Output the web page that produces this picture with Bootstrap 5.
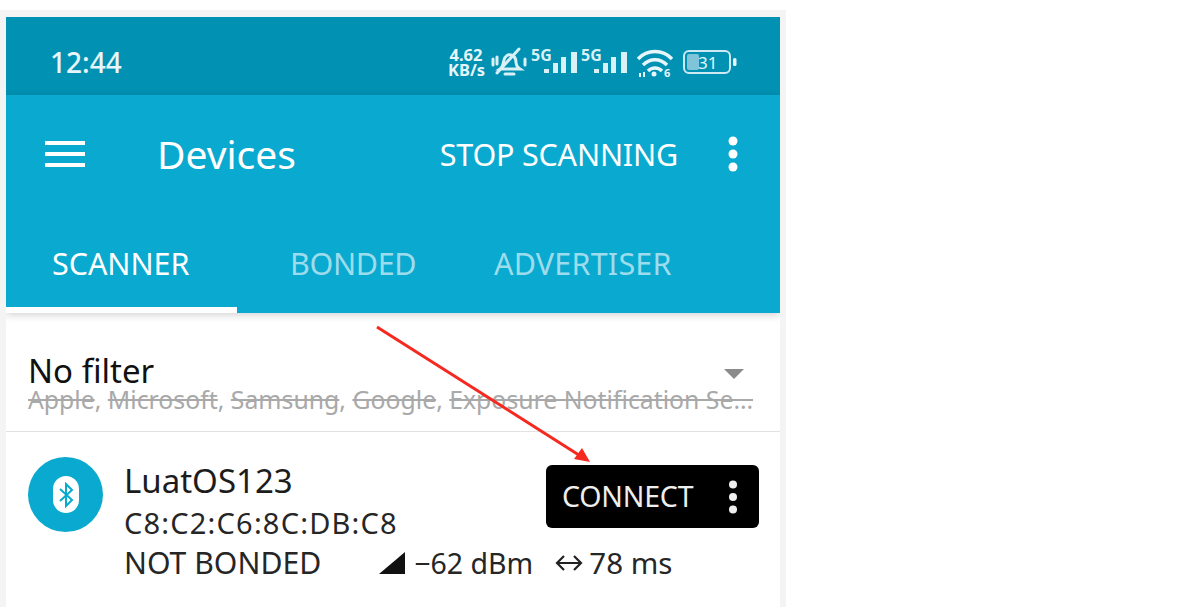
<!DOCTYPE html>
<html lang="en">
<head>
    <meta charset="UTF-8">
    <meta name="viewport" content="width=device-width, initial-scale=1.0">
    <title>Devices</title>
    <link href="https://cdn.jsdelivr.net/npm/bootstrap@5.3.0/dist/css/bootstrap.min.css" rel="stylesheet">
    <style>
        html, body { height: 100%; }
        body { background: #fff; font-family: "Noto Sans", sans-serif; overflow: hidden; padding-top: 10px; }
        .phone-frame { width: 786px; height: 597px; background: #f4f4f4; padding: 7px 6px 0; position: relative; }
        .phone-screen { height: 100%; background: #fff; overflow: hidden; }
        .status-strip { height: 78px; background: #0091b3; color: #e6f6fa; padding: 12px 43px 0 44px; }
        .clock-text { font-size: 28px; font-weight: 500; }
        .speed-text { font-size: 16.5px; line-height: 15px; font-weight: 700; text-align: center; width: 36px; white-space: nowrap; }
        .status-icons svg { display: block; flex: none; }
        .bell-icon { margin-left: 7px; }
        .wifi-icon, .batt-icon { margin-left: 10px; }
        .tool-strip { height: 218px; background: #0aa9cf; color: #fff; box-shadow: 0 2px 8px rgba(0,0,0,.18); position: relative; }
        .tool-row { height: 118px; padding: 0 41px 0 39px; }
        .tool-title { font-size: 39px; margin-left: 72px; line-height: 1; padding-bottom: 2px; }
        .tool-action { font-size: 30.5px; letter-spacing: -.2px; line-height: 1; margin-right: 49px; }
        .tab-row { height: 100px; }
        .tab-cell { height: 100%; display: flex; align-items: center; font-size: 30.5px; letter-spacing: -.2px; padding-top: 2px; }
        .tab-scan { width: 231px; padding: 8px 0 0 46px; border-bottom: 6px solid #fff; letter-spacing: -.05px; }
        .tab-bond { width: 257px; padding-left: 53px; color: #9ddcec; letter-spacing: -.35px; }
        .tab-adv { color: #9ddcec; letter-spacing: .2px; }
        .filter-row { height: 119px; border-bottom: 1px solid #e2e2e2; padding: 42px 27px 0 22px; position: relative; }
        .filter-name { font-size: 33px; line-height: 32px; color: #111; }
        .filter-sub { font-size: 24.8px; line-height: 24px; color: #a9a9a9; white-space: nowrap; }
        .filter-sub span { text-decoration: line-through; }
        .filter-caret { position: absolute; right: 36px; top: 56px; width: 0; height: 0; border-left: 10.5px solid transparent; border-right: 10.5px solid transparent; border-top: 10px solid #8b8b8b; }
        .device-row { padding: 25px 21px 0 22px; }
        .ble-disc { width: 75px; height: 75px; border-radius: 50%; background: #0aa9cf; flex: none; margin-right: 21px; }
        .ble-pill { width: 26px; height: 37px; border-radius: 13px; background: #fff; }
        .device-name { font-size: 33px; line-height: 45px; color: #1c1c1c; margin-top: 1px; }
        .device-line { font-size: 29px; line-height: 40px; color: #262626; white-space: nowrap; }
        .mac-line { letter-spacing: 1.2px; }
        .stat-line { font-size: 30.200px; }
        .stat-num { font-size: 28.500px; }
        .stat-ms { font-size: 29.500px; }
        .stat-tri { margin-left: 58px; margin-right: 9px; }
        .stat-arrows { margin-left: 22px; margin-right: 6px; }
        .connect-btn { position: absolute; left: 546px; top: 455px; width: 213px; height: 63px; background: #000; color: #eee; border-radius: 6px; font-size: 28.500px; padding: 0 20px 0 16px; letter-spacing: -.2px; }
        .arrow-layer { position: absolute; left: 0; top: 0; pointer-events: none; }
    </style>
</head>
<body>
    <div class="phone-frame">
        <div class="phone-screen">
            <div class="status-strip d-flex align-items-center justify-content-between">
                <span class="clock-text">12:44</span>
                <div class="status-icons d-flex align-items-center">
                    <div class="speed-text">4.62<br>KB/s</div>
                    <svg class="bell-icon" width="36" height="32" viewBox="0 0 36 32" fill="none" stroke="#d8f0f6" stroke-width="3">
                        <path d="M9 23c3-2 3-5 4-9 1-4 4-6 7-5 3 1 5 3 5 7 0 3 1 5 4 7z"/>
                        <path d="M14 28h9M6 27 28 3M2 13v6M6 11v7M34 13v6" stroke-linecap="round"/>
                    </svg>
                    <svg class="ms-1" width="46" height="36" viewBox="0 0 46 36" fill="#d8f0f6">
                        <text x="0" y="17" font-size="16" font-weight="700" font-family="Noto Sans">5G</text>
                        <rect x="13" y="25" width="5" height="4"/><rect x="22" y="19" width="5" height="10"/><rect x="30" y="13" width="5" height="16"/><rect x="40" y="8" width="6" height="21"/>
                    </svg>
                    <svg class="ms-1" width="46" height="36" viewBox="0 0 46 36" fill="#d8f0f6">
                        <text x="0" y="17" font-size="16" font-weight="700" font-family="Noto Sans">5G</text>
                        <rect x="13" y="25" width="5" height="4"/><rect x="22" y="19" width="5" height="10"/><rect x="30" y="13" width="5" height="16"/><rect x="40" y="8" width="6" height="21"/>
                    </svg>
                    <svg class="wifi-icon" width="36" height="36" viewBox="0 0 36 36" fill="none" stroke="#e6f6fa" stroke-width="3.500">
                        <path d="M1 15C10 5 26 5 35 15M6 21c7-7 17-7 24 0M11 27c4-4 10-4 14 0"/>
                        <circle cx="17" cy="30" r="2.500" fill="#e6f6fa" stroke="none"/>
                        <text x="27" y="33" font-size="11" font-weight="700" fill="#e6f6fa" stroke="none" font-family="Noto Sans">6</text>
                        <path d="M3 33v-4M7 33v-5" stroke-width="2"/>
                    </svg>
                    <svg class="batt-icon" width="54" height="26" viewBox="0 0 54 26" fill="none">
                        <rect x="1" y="2" width="46" height="22" rx="5" stroke="#cdeaf2" stroke-width="2"/>
                        <rect x="4" y="5" width="12" height="16" rx="2" fill="#7fc4d8"/>
                        <rect x="50" y="9" width="3.500" height="8" rx="1.500" fill="#e6f6fa"/>
                        <text x="15" y="19.500" font-size="17" fill="#e6f6fa" font-family="Noto Sans">31</text>
                    </svg>
                </div>
            </div>

            <div class="tool-strip">
                <div class="tool-row d-flex align-items-center">
                    <svg width="40" height="28" viewBox="0 0 40 28" fill="#fff"><rect y="1" width="40" height="4"/><rect y="12" width="40" height="4"/><rect y="23" width="40" height="4"/></svg>
                    <span class="tool-title">Devices</span>
                    <span class="tool-action ms-auto">STOP SCANNING</span>
                    <svg width="12" height="36" viewBox="0 0 12 36" fill="#fff"><circle cx="6" cy="5" r="4.500"/><circle cx="6" cy="18" r="4.500"/><circle cx="6" cy="31" r="4.500"/></svg>
                </div>
                <div class="tab-row d-flex">
                    <div class="tab-cell tab-scan">SCANNER</div>
                    <div class="tab-cell tab-bond">BONDED</div>
                    <div class="tab-cell tab-adv">ADVERTISER</div>
                </div>
            </div>

            <div class="filter-row">
                <div class="filter-name">No filter</div>
                <div class="filter-sub"><span>Apple</span>, <span>Microsoft</span>, <span>Samsung</span>, <span>Google</span>, <span>Exposure Notification Se…</span></div>
                <div class="filter-caret"></div>
            </div>

            <div class="device-row d-flex">
                <div class="ble-disc d-flex align-items-center justify-content-center">
                    <div class="ble-pill d-flex align-items-center justify-content-center">
                        <svg width="16" height="26" viewBox="0 0 16 26" fill="none" stroke="#0aa9cf" stroke-width="2"><path d="M2 7l12 11-6 6V2l6 6L2 19"/></svg>
                    </div>
                </div>
                <div>
                    <div class="device-name">LuatOS123</div>
                    <div class="device-line mac-line">C8:C2:C6:8C:DB:C8</div>
                    <div class="device-line stat-line d-flex align-items-center">
                        <span>NOT BONDED</span>
                        <svg class="stat-tri" width="26" height="22" viewBox="0 0 26 22" fill="#111"><path d="M0 22 26 0v22z"/></svg>
                        <span class="stat-num">−62 dBm</span>
                        <svg class="stat-arrows" width="28" height="22" viewBox="0 0 28 22" fill="none" stroke="#222" stroke-width="2.200"><path d="M2 11h24M9 4l-7 7 7 7M19 4l7 7-7 7"/></svg>
                        <span class="stat-ms">78 ms</span>
                    </div>
                </div>
            </div>
        </div>

        <div class="connect-btn d-flex align-items-center justify-content-between">
            <span>CONNECT</span>
            <svg width="12" height="34" viewBox="0 0 12 34" fill="#eee"><circle cx="6" cy="4.500" r="4"/><circle cx="6" cy="17" r="4"/><circle cx="6" cy="29.500" r="4"/></svg>
        </div>

        <svg class="arrow-layer" width="786" height="597" viewBox="0 0 786 597">
            <path d="M377 317 582 447" stroke="#f5291f" stroke-width="3" fill="none"/>
            <path d="M590 452 574 449 582 438z" fill="#f5291f"/>
        </svg>
    </div>

    <script src="https://cdn.jsdelivr.net/npm/bootstrap@5.3.0/dist/js/bootstrap.bundle.min.js"></script>
</body>
</html>
